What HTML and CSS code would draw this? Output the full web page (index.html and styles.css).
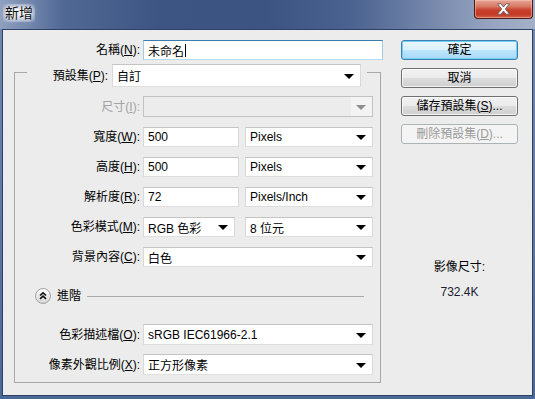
FILE: index.html
```html
<!DOCTYPE html>
<html lang="zh-Hant">

<head>
    <meta charset="UTF-8">
    <title>新增</title>
    <link rel="stylesheet" href="styles.css">
</head>

<body>
    <div class="window">
        <div class="titlebar">
            <span class="title">新增</span>
            <div class="close">
                <svg width="15" height="12" viewBox="0 0 15 12">
                    <path d="M1.5 0.8 H5 L7.5 4 L10 0.8 H13.5 L9.3 6 L13.5 11.2 H10 L7.5 8 L5 11.2 H1.5 L5.7 6 Z" fill="#fff" stroke="#6b5a58" stroke-width="0.9" />
                </svg>
            </div>
        </div>
        <div class="frame">
            <div class="client">
                <div class="form">
                    <div class="row name-row">
                        <label class="lbl">名稱(<u>N</u>):</label>
                        <div class="field focused">未命名<span class="caret"></span></div>
                    </div>

                    <div class="group">
                        <div class="legend">
                            <label class="lbl">預設集(<u>P</u>):</label>
                            <div class="select preset">自訂<i class="arrow"></i></div>
                        </div>

                        <div class="row size-row">
                            <label class="lbl disabled">尺寸(<u>I</u>):</label>
                            <div class="select full off"><span class="drop"><i class="arrow"></i></span></div>
                        </div>

                        <div class="row">
                            <label class="lbl">寬度(<u>W</u>):</label>
                            <div class="field num">500</div>
                            <div class="select unit">Pixels<i class="arrow"></i></div>
                        </div>

                        <div class="row">
                            <label class="lbl">高度(<u>H</u>):</label>
                            <div class="field num">500</div>
                            <div class="select unit">Pixels<i class="arrow"></i></div>
                        </div>

                        <div class="row">
                            <label class="lbl">解析度(<u>R</u>):</label>
                            <div class="field num">72</div>
                            <div class="select unit">Pixels/Inch<i class="arrow"></i></div>
                        </div>

                        <div class="row">
                            <label class="lbl">色彩模式(<u>M</u>):</label>
                            <div class="select mode">RGB 色彩<i class="arrow"></i></div>
                            <div class="select unit">8 位元<i class="arrow"></i></div>
                        </div>

                        <div class="row">
                            <label class="lbl">背景內容(<u>C</u>):</label>
                            <div class="select full">白色<i class="arrow"></i></div>
                        </div>

                        <div class="advanced">
                            <span class="toggle">
                                <svg width="16" height="16" viewBox="0 0 16 16">
                                    <defs>
                                        <linearGradient id="tg" x1="0" y1="0" x2="0" y2="1">
                                            <stop offset="0" stop-color="#ffffff" />
                                            <stop offset="1" stop-color="#d6d6d6" />
                                        </linearGradient>
                                    </defs>
                                    <circle cx="8" cy="8" r="7.5" fill="url(#tg)" stroke="#a2a2a2" />
                                    <path d="M5 7.5 L8 4.8 L11 7.5 M5 10.8 L8 8.1 L11 10.8" fill="none" stroke="#111" stroke-width="1.6" />
                                </svg>
                            </span>
                            <span class="adv-text">進階</span>
                            <span class="rule"></span>
                        </div>

                        <div class="row profile-row">
                            <label class="lbl">色彩描述檔(<u>O</u>):</label>
                            <div class="select full">sRGB IEC61966-2.1<i class="arrow"></i></div>
                        </div>

                        <div class="row aspect-row">
                            <label class="lbl">像素外觀比例(<u>X</u>):</label>
                            <div class="select full">正方形像素<i class="arrow"></i></div>
                        </div>
                    </div>
                </div>

                <div class="side">
                    <div class="btn default">確定</div>
                    <div class="btn">取消</div>
                    <div class="btn">儲存預設集(<u>S</u>)...</div>
                    <div class="btn disabled">刪除預設集(<u>D</u>)...</div>

                    <div class="info">
                        <p class="info-label">影像尺寸:</p>
                        <p class="info-value">732.4K</p>
                    </div>
                </div>
            </div>
        </div>
    </div>
</body>

</html>
```

FILE: styles.css
```css
* {
    margin: 0;
    padding: 0;
    box-sizing: border-box;
}

body {
    width: 535px;
    height: 399px;
    overflow: hidden;
    font-family: "Liberation Sans", "Noto Sans CJK TC", sans-serif;
    font-size: 12px;
    color: #000;
    background: #4a6290;
}

.window {
    width: 535px;
    height: 399px;
    display: flex;
    flex-direction: column;
    background: linear-gradient(to right, #8fa0c0 0%, #4f6894 12%, #3c5582 30%, #3b5481 50%, #4b6390 66%, #7486aa 80%, #97a5c1 92%, #a3b0c8 100%);
}

/* title bar */
.titlebar {
    height: 29px;
    display: flex;
    align-items: flex-start;
    flex-shrink: 0;
}

.title {
    margin: 4px 0 0 3px;
    padding: 0 2px;
    font-size: 14px;
    line-height: 18px;
    color: #111;
    background: radial-gradient(ellipse at center, rgba(225, 232, 243, 0.95) 30%, rgba(200, 210, 228, 0.5) 65%, rgba(200, 210, 228, 0) 100%);
    text-shadow: 0 0 6px #fff, 0 0 3px #fff;
}

.close {
    margin-left: auto;
    margin-right: 2px;
    width: 59px;
    height: 19px;
    border: 1px solid #4a1d16;
    border-top: none;
    border-radius: 0 0 4px 4px;
    background: linear-gradient(to bottom, #e6a797 0%, #d77a65 35%, #c8412c 55%, #c23a26 80%, #d3634c 100%);
    box-shadow: inset 0 0 0 1px rgba(255, 200, 190, 0.5);
    display: flex;
    align-items: center;
    justify-content: center;
}

/* frame + client */
.frame {
    flex: 1;
    padding: 0 2px 3px;
    background: linear-gradient(to bottom, #6f86b0, #4c6898);
}

.client {
    height: 367px;
    border: 1px solid #2f4266;
    background: #ececec;
    display: flex;
}

.form {
    width: 380px;
    padding-left: 11px;
}

.row {
    display: flex;
    align-items: center;
    height: 20px;
    margin-top: 10px;
}

.lbl {
    width: 125px;
    margin-right: 3px;
    text-align: right;
    white-space: nowrap;
    line-height: 16px;
}

.lbl.disabled {
    color: #a3a3a3;
}

.name-row {
    margin-top: 10px;
}

.name-row .lbl {
    width: 126px;
}

.field,
.select {
    height: 100%;
    display: flex;
    align-items: center;
    padding-left: 4px;
    background: #fff;
    border: 1px solid;
    border-color: #c4c4c4 #d9d9d9 #dedede #d9d9d9;
    white-space: nowrap;
}

.field.focused {
    width: 240px;
    border-color: #3d7bad #a4c9e3 #b7d9ed #a4c9e3;
}

.caret {
    display: inline-block;
    width: 1px;
    height: 13px;
    margin-left: 1px;
    background: #000;
}

.field.num {
    width: 96px;
}

.select {
    position: relative;
    padding-right: 24px;
}

.arrow {
    position: absolute;
    right: 6px;
    top: 50%;
    margin-top: -2px;
    border-left: 5px solid transparent;
    border-right: 5px solid transparent;
    border-top: 5px solid #000;
}

.select.unit {
    width: 128px;
    margin-left: 6px;
}

.select.mode {
    width: 92px;
    margin-right: 4px;
}

.select.full {
    width: 230px;
}

.select.off {
    background: #ececec;
    border-color: #c2c2c2;
}

.drop {
    position: absolute;
    right: 0;
    top: 0;
    bottom: 0;
    width: 21px;
    background: #f3f3f3;
}

.drop .arrow {
    right: 6px;
    border-top-color: #8d8d8d;
}

/* group box */
.group {
    width: 367px;
    height: 311px;
    margin-top: 12px;
    border: 1px solid #a8a8a8;
}

.legend {
    display: flex;
    align-items: center;
    width: 340px;
    height: 23px;
    margin: -9px 0 0 12px;
    padding-right: 6px;
    background: #ececec;
}

.legend .lbl {
    width: 81px;
    margin-right: 4px;
}

.select.preset {
    width: 249px;
    height: 23px;
}

.size-row {
    height: 21px;
    margin-top: 9px;
}

.advanced {
    display: flex;
    align-items: center;
    height: 16px;
    margin: 21px 16px 0 20px;
}

.toggle {
    display: flex;
    width: 16px;
    height: 16px;
}

.adv-text {
    margin-left: 6px;
    line-height: 16px;
}

.rule {
    flex: 1;
    height: 1px;
    margin-left: 6px;
    background: #a8a8a8;
}

.profile-row {
    height: 21px;
    margin-top: 20px;
}

.aspect-row {
    height: 21px;
    margin-top: 9px;
}

/* buttons */
.side {
    width: 117px;
    margin-left: 18px;
    padding-top: 10px;
}

.btn {
    height: 20px;
    margin-bottom: 8px;
    border: 1px solid #707070;
    border-radius: 3px;
    background: linear-gradient(to bottom, #f2f2f2 0%, #ebebeb 50%, #dddddd 50%, #cfcfcf 100%);
    box-shadow: inset 0 0 0 1px rgba(255, 255, 255, 0.7);
    text-align: center;
    line-height: 18px;
    white-space: nowrap;
}

.btn.default {
    border-color: #3c7fb1;
    box-shadow: inset 0 0 0 1px #6fd0f4;
    background: linear-gradient(to bottom, #eaf6fd 0%, #d9f0fc 50%, #bee6fd 50%, #a7d9f5 100%);
}

.btn.disabled {
    color: #9a9a9a;
    border-color: #adb2b5;
    background: #f4f4f4;
    box-shadow: none;
}

.info {
    margin-top: 115px;
    text-align: center;
    line-height: 16px;
}

.info-value {
    margin-top: 9px;
    color: #1c1c30;
}
```
